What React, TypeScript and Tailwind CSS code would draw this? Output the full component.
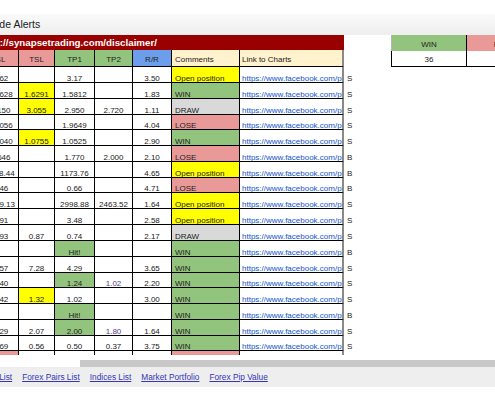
import React from "react";

type R = {
  c0: string;
  c0p?: boolean;
  tsl: string;
  tslY?: boolean;
  tp1: string;
  tp1G?: boolean;
  tp2: string;
  tp2P?: boolean;
  rr: string;
  cm: string;
  s: string;
};

const rows: R[] = [
  { c0: "3.62", tsl: "", tp1: "3.17", tp2: "", rr: "3.50", cm: "Open position", s: "S" },
  { c0: "1.6628", tsl: "1.6291", tslY: true, tp1: "1.5812", tp2: "", rr: "1.83", cm: "WIN", s: "S" },
  { c0: "3.150", tsl: "3.055", tslY: true, tp1: "2.950", tp2: "2.720", rr: "1.11", cm: "DRAW", s: "S" },
  { c0: "1.9056", tsl: "", tp1: "1.9649", tp2: "", rr: "4.04", cm: "LOSE", s: "S" },
  { c0: "1.1040", tsl: "1.0755", tslY: true, tp1: "1.0525", tp2: "", rr: "2.90", cm: "WIN", s: "S" },
  { c0: "1.646", tsl: "", tp1: "1.770", tp2: "2.000", rr: "2.10", cm: "LOSE", s: "B" },
  { c0: "1168.44", tsl: "", tp1: "1173.76", tp2: "", rr: "4.65", cm: "Open position", s: "B" },
  { c0: "0.46", tsl: "", tp1: "0.66", tp2: "", rr: "4.71", cm: "LOSE", s: "B" },
  { c0: "2979.13", tsl: "", tp1: "2998.88", tp2: "2463.52", rr: "1.64", cm: "Open position", s: "S" },
  { c0: "3.91", tsl: "", tp1: "3.48", tp2: "", rr: "2.58", cm: "Open position", s: "S" },
  { c0: "0.93", tsl: "0.87", tp1: "0.74", tp2: "", rr: "2.17", cm: "DRAW", s: "S" },
  { c0: "", tsl: "", tp1: "Hit!", tp1G: true, tp2: "", rr: "", cm: "WIN", s: "B" },
  { c0: "4.57", tsl: "7.28", tp1: "4.29", tp2: "", rr: "3.65", cm: "WIN", s: "S" },
  { c0: "1.40", tsl: "", tp1: "1.24", tp1G: true, tp2: "1.02", tp2P: true, rr: "2.20", cm: "WIN", s: "S" },
  { c0: "1.42", tsl: "1.32", tslY: true, tp1: "1.02", tp2: "", rr: "3.00", cm: "WIN", s: "S" },
  { c0: "", tsl: "", tp1: "Hit!", tp1G: true, tp2: "", rr: "", cm: "WIN", s: "B" },
  { c0: "2.29", tsl: "2.07", tp1: "2.00", tp1G: true, tp2: "1.80", tp2P: true, rr: "1.64", cm: "WIN", s: "S" },
  { c0: "0.69", tsl: "0.56", tp1: "0.50", tp2: "0.37", rr: "3.75", cm: "WIN", s: "S" },
  { c0: "", c0p: true, tsl: "", tp1: "", tp2: "", rr: "", cm: "LOSE", s: "" },
];

const heights = [16, 16, 16, 15, 16, 16, 16, 15, 16, 16, 16, 16, 16, 15, 16, 16, 16, 15, 16];

const cmBg: Record<string, string> = {
  "Open position": "bg-[#ffff00]",
  WIN: "bg-[#93c47d]",
  DRAW: "bg-[#d9d9d9]",
  LOSE: "bg-[#ea9999]",
};

const base =
  "shrink-0 flex items-end overflow-hidden whitespace-nowrap border-r border-b border-black leading-[6px]";
const head =
  "shrink-0 flex items-end overflow-hidden whitespace-nowrap border-r border-b border-black leading-[6px] pb-[3px]";

function DataRow({ r, h }: { r: R; h: number }) {
  return (
    <div className={`flex shrink-0 ${h === 15 ? "h-[15px]" : "h-[16px]"}`}>
      <div className={`${base} w-[36px] justify-center ${r.c0p ? "bg-[#ea9999]" : ""}`}>{r.c0}</div>
      <div className={`${base} w-[36px] justify-center ${r.tslY ? "bg-[#ffff00]" : ""}`}>{r.tsl}</div>
      <div className={`${base} w-[40px] justify-center ${r.tp1G ? "bg-[#93c47d]" : ""}`}>{r.tp1}</div>
      <div className={`${base} w-[38px] justify-center ${r.tp2P ? "text-[#5b3a8c]" : ""}`}>{r.tp2}</div>
      <div className={`${base} w-[39px] justify-center`}>{r.rr}</div>
      <div className={`${base} w-[68px] pl-[3px] ${cmBg[r.cm]}`}>{r.cm}</div>
      <div className={`${base} w-[104px] pl-[2px] border-r-2 border-r-[#8a8a8a]`}>
        {r.s !== "" && (
          <span className="text-[#1155cc] underline">https://www.facebook.com/photo.php?fbid=10</span>
        )}
      </div>
      <div className="shrink-0 w-[47px] flex items-end pl-[3px] leading-[6px] pb-[1px]">{r.s}</div>
    </div>
  );
}

export default function App() {
  return (
    <div className="w-[495px] h-[400px] overflow-hidden bg-white flex flex-col font-['Liberation_Sans',Arial,sans-serif] text-[#222] text-[8px]">
      <div className="h-[14px] shrink-0" />
      <div className="h-[21px] shrink-0 bg-gradient-to-b from-[#fafafa] to-[#eeeeee] flex items-center overflow-hidden">
        <span className="ml-[-16px] text-[10.5px] leading-none text-[#222] whitespace-nowrap">Trade Alerts</span>
      </div>
      <div className="h-[320px] shrink-0 overflow-hidden">
        <div className="ml-[-17px] w-[600px] flex flex-col">
          <div className="flex shrink-0">
            <div className="w-[361px] shrink-0 flex flex-col">
              <div className="h-[15px] bg-[#990000] flex items-center overflow-hidden">
                <span className="ml-[-7px] text-white font-bold text-[9.75px] leading-none whitespace-nowrap">
                  https://synapsetrading.com/disclaimer/
                </span>
              </div>
              <div className="flex h-[17px]">
                <div className={`${head} w-[36px] justify-center bg-[#ea9999]`}>SL</div>
                <div className={`${head} w-[36px] justify-center bg-[#ea9999]`}>TSL</div>
                <div className={`${head} w-[40px] justify-center bg-[#93c47d]`}>TP1</div>
                <div className={`${head} w-[38px] justify-center bg-[#93c47d]`}>TP2</div>
                <div className={`${head} w-[39px] justify-center bg-[#6d9eeb]`}>R/R</div>
                <div className={`${head} w-[68px] pl-[3px] bg-[#fff2cc]`}>Comments</div>
                <div className={`${head} w-[104px] pl-[2px] bg-[#fff2cc] border-r-2 border-r-[#8a8a8a]`}>
                  Link to Charts
                </div>
              </div>
            </div>
            <div className="w-[47px] shrink-0" />
            <div className="w-[76px] shrink-0 flex flex-col">
              <div className="h-[16px] bg-[#93c47d] border-l border-l-[#b5b5b5] border-r border-r-black flex items-end justify-center leading-[6px] pb-[3px]">
                WIN
              </div>
              <div className="h-[16px] border-l border-r border-b border-black flex items-end justify-center leading-[6px] pb-[3px]">
                36
              </div>
            </div>
            <div className="w-[76px] shrink-0 flex flex-col">
              <div className="h-[16px] bg-[#ea9999] border-r border-black flex items-end justify-center leading-[6px] pb-[3px]">
                LOSE
              </div>
              <div className="h-[16px] border-r border-b border-black flex items-end justify-center leading-[6px] pb-[3px]">
                12
              </div>
            </div>
          </div>
          {rows.map((r, i) => (
            <DataRow key={i} r={r} h={heights[i]} />
          ))}
        </div>
      </div>
      <div className="h-[5px] shrink-0" />
      <div className="h-[7px] shrink-0 flex">
        <div className="w-[80px] shrink-0" />
        <div className="flex-1 bg-[#c8c8c8]" />
      </div>
      <div className="h-[20px] shrink-0 bg-[#eeeeee] flex items-center gap-[10px] text-[8.3px] leading-none whitespace-nowrap text-[#3535b5]">
        <span className="ml-[-28px] underline shrink-0">Stocks List</span>
        <span className="underline shrink-0">Forex Pairs List</span>
        <span className="underline shrink-0">Indices List</span>
        <span className="underline shrink-0">Market Portfolio</span>
        <span className="underline shrink-0">Forex Pip Value</span>
      </div>
    </div>
  );
}
